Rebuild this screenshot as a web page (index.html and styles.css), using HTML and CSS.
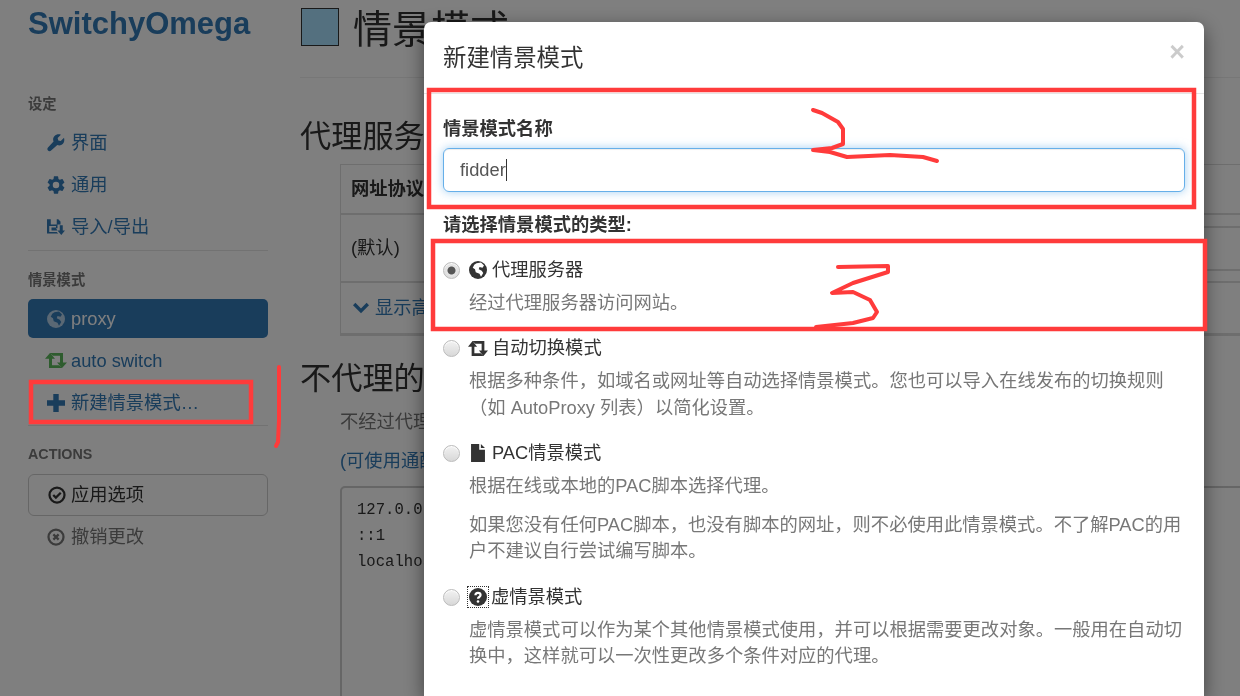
FILE: index.html
```html
<!DOCTYPE html>
<html lang="zh-CN">
<head>
  <meta charset="UTF-8" />
  <title>SwitchyOmega</title>
  <link rel="stylesheet" href="styles.css">
</head>
<body>

<div class="page">
  <aside class="sidebar">
    <div class="logo">SwitchyOmega</div>

    <div class="nav-head first">设定</div>
    <a class="pill">
      <svg class="ico" viewBox="1 1 22 22"><path d="M21.8 5.6l-4 4-3-.8-.8-3 4-4C15.2 1 12 1.5 10.2 3.4 8.4 5.2 8 7.9 9 10.1L2.2 17.6c-1 1-1 2.7 0 3.7s2.7 1.1 3.8 0l7.6-6.8c2.2 1 4.9.6 6.6-1.2 1.9-1.9 2.4-5 1.6-7.7z"/></svg>界面</a>
    <a class="pill">
      <svg class="ico" viewBox="2 2 20 20"><path d="M19.14 12.94c.04-.3.06-.61.06-.94 0-.32-.02-.64-.07-.94l2.03-1.58a.49.49 0 0 0 .12-.61l-1.92-3.32a.488.488 0 0 0-.59-.22l-2.39.96c-.5-.38-1.03-.7-1.62-.94l-.36-2.54a.484.484 0 0 0-.48-.41h-3.84c-.24 0-.43.17-.47.41l-.36 2.54c-.59.24-1.13.57-1.62.94l-2.39-.96c-.22-.08-.47 0-.59.22L2.74 8.87c-.12.21-.08.47.12.61l2.03 1.58c-.05.3-.09.63-.09.94s.02.64.07.94l-2.03 1.58a.49.49 0 0 0-.12.61l1.92 3.32c.12.22.37.29.59.22l2.39-.96c.5.38 1.03.7 1.62.94l.36 2.54c.05.24.24.41.48.41h3.84c.24 0 .44-.17.47-.41l.36-2.54c.59-.24 1.13-.56 1.62-.94l2.39.96c.22.08.47 0 .59-.22l1.92-3.32c.12-.22.07-.47-.12-.61l-2.01-1.58zM12 15.6A3.6 3.6 0 1 1 12 8.4a3.6 3.6 0 0 1 0 7.2z"/></svg>通用</a>
    <a class="pill">
      <svg class="ico" viewBox="0 1 24 23"><path d="M0 2h5v7h8V2h2l3 3v4h-4v5h-2l2 3H6v-4h6v-2H3v8h10l2 2H0z"/><path d="M17 10h4v7h3l-5 6-5-6h3z"/></svg>导入/导出</a>
    <div class="divider"></div>

    <div class="nav-head">情景模式</div>
    <a class="pill active">
      <svg class="ico globe" viewBox="0 0 24 24"><circle cx="12" cy="12" r="12"/><path class="land" d="M10 3l6-1 4 4-2 3-4-1-1 3 4 2 2 3-3 5-2-4-5-2-1-4-3-2 2-4z"/></svg>proxy</a>
    <a class="pill">
      <svg class="ico retweet green" viewBox="1 4 22 16" preserveAspectRatio="none"><path d="M6 4l5 6H8v7h7l3 3H5V10H1zM18 20l-5-6h3V7H9L6 4h13v10h4z"/></svg>auto switch</a>
    <a class="pill">
      <svg class="ico" viewBox="2 2 20 20"><path d="M9 2h6v7h7v6h-7v7H9v-7H2V9h7z"/></svg>新建情景模式…</a>
    <div class="divider"></div>

    <div class="nav-head actions">ACTIONS</div>
    <button class="btn-apply">
      <svg class="ico" viewBox="0 0 24 24"><circle class="ring" cx="12" cy="12" r="10"/><path class="ring" d="M7 12l3.5 3.5L17 9"/></svg>应用选项</button>
    <a class="pill muted">
      <svg class="ico" viewBox="0 0 24 24"><circle class="ring" cx="12" cy="12" r="10"/><path class="ring" d="M8.5 8.5l7 7M15.5 8.5l-7 7"/></svg>撤销更改</a>
  </aside>

  <main class="content">
    <div class="page-title">
      <span class="color-box"></span>
      <h1>情景模式:</h1>
    </div>

    <h2 class="server-head">代理服务器</h2>
    <div class="box-table">
      <div class="tr thead"><b>网址协议</b></div>
      <div class="tr tbody">(默认)<span class="row-lines"></span></div>
      <div class="tr tfoot">
        <svg class="ico link" viewBox="2 4 20 15"><path d="M2 8l3-3 7 7 7-7 3 3-10 10z"/></svg><a class="link">显示高级设置</a>
      </div>
    </div>

    <h2 class="bypass-head">不代理的地址列表</h2>
    <p class="note">不经过代理连接的地址列表</p>
    <p class="note"><a class="link">(可使用通配符等匹配规则)</a></p>
    <div class="bypass-list">127.0.0.1<br>::1<br>localhost</div>
  </main>
</div>

<div class="backdrop"></div>

<div class="modal">
  <div class="modal-head">
    <h4>新建情景模式</h4>
    <span class="close">×</span>
  </div>
  <div class="modal-body">
    <label class="field-label">情景模式名称</label>
    <div class="name-input">fidder<span class="caret"></span></div>

    <label class="field-label type-label">请选择情景模式的类型:</label>

    <div class="option">
      <input type="radio" name="ptype" checked>
      <div class="opt-title">
        <svg class="ico globe" viewBox="0 0 24 24"><circle cx="12" cy="12" r="12"/><path class="land" d="M10 3l6-1 4 4-2 3-4-1-1 3 4 2 2 3-3 5-2-4-5-2-1-4-3-2 2-4z"/></svg>代理服务器
      </div>
      <p class="help">经过代理服务器访问网站。</p>
    </div>

    <div class="option">
      <input type="radio" name="ptype">
      <div class="opt-title">
        <svg class="ico wide" viewBox="1 4 22 16" preserveAspectRatio="none"><path d="M6 4l5 6H8v7h7l3 3H5V10H1zM18 20l-5-6h3V7H9L6 4h13v10h4z"/></svg>自动切换模式
      </div>
      <p class="help">根据多种条件，如域名或网址等自动选择情景模式。您也可以导入在线发布的切换规则（如 AutoProxy 列表）以简化设置。</p>
    </div>

    <div class="option">
      <input type="radio" name="ptype">
      <div class="opt-title">
        <svg class="ico" viewBox="3 1 19 22"><path d="M4 1h10v7h7v15H4z"/><path d="M16 1l5 5h-5z"/></svg>PAC情景模式
      </div>
      <p class="help">根据在线或本地的PAC脚本选择代理。</p>
      <p class="help">如果您没有任何PAC脚本，也没有脚本的网址，则不必使用此情景模式。不了解PAC的用户不建议自行尝试编写脚本。</p>
    </div>

    <div class="option">
      <input type="radio" name="ptype">
      <div class="opt-title">
        <span class="focus-mark"><svg class="ico" viewBox="0 0 24 24"><circle cx="12" cy="12" r="12"/><path class="qmark" d="M8.6 9.6c0-2 1.5-3.2 3.4-3.2s3.4 1.2 3.4 3c0 2.6-3.4 2.6-3.4 5"/><circle class="qdot" cx="12" cy="18" r="1.7"/></svg></span>虚情景模式
      </div>
      <p class="help">虚情景模式可以作为某个其他情景模式使用，并可以根据需要更改对象。一般用在自动切换中，这样就可以一次性更改多个条件对应的代理。</p>
    </div>
  </div>
</div>

<!-- hand drawn marks on top of the screenshot -->
<svg class="marks" viewBox="0 0 1240 696">
  <rect x="31" y="382" width="220" height="40"/>
  <rect x="429" y="90" width="765" height="117"/>
  <rect x="433" y="241" width="772" height="88"/>
  <path d="M279 367 L279 420 L278 442 L276 446"/>
  <path d="M813 110 L822 113 L838 122 L843 129 L843 144 L832 148 L813 150 L830 152 L847 157 L890 155 L923 157 L937 161"/>
  <path d="M838 267 L888 266 L888 272 L853 283 L832 293 L853 292 L870 300 L877 312 L873 318 L853 323 L816 327"/>
</svg>

</body>
</html>
```

FILE: styles.css
```css
html, body {
  margin:0; height:100%; overflow:hidden;
}
body {
  font-family: "Liberation Sans", "Noto Sans CJK SC", sans-serif;
  font-size:18.3px; line-height:26px;
  background:#fff; color:#333;
  width:1240px; height:696px; position:relative;
  filter:blur(.35px);
}
.page {
  display:flex; height:696px; overflow:hidden;
}

/* sidebar */
.sidebar {
  width:240px; flex:none;
  margin:0 32px 0 28px;
}
.logo {
  font-size:31px; font-weight:700; line-height:48px;
  color:#337ab7;
}
.nav-head {
  font-size:14.3px; font-weight:700; line-height:20px;
  color:#777;
  margin:19px 0 9.5px;
}
.nav-head.first {
  margin-top:46px;
}
.nav-head.actions {
  margin-top:18px;
}
.pill {
  display:flex; align-items:center;
  height:39px; padding-left:19px; margin-top:3px;
  border-radius:5px;
  color:#337ab7;
}
.nav-head + .pill {
  margin-top:0;
}
.pill.active {
  background:#337ab7; color:#fff;
}
.pill.muted { color:#777; margin-top:2px; }
.divider {
  height:1px; background:#e5e5e5; margin-top:3px;
}
.ico {
  width:18px; height:18px; flex:none; fill:currentColor;
  margin-right:6px;
}
.ico.green { color:#5cb85c; width:22px; height:15px; margin:0 4px 0 -2px; }
.ico.globe .land { fill:#fff; }
.pill.active .ico.globe { color:#b4d0e8; }
.pill.active .ico.globe .land { fill:#337ab7; }
.ring {
  fill:none; stroke:currentColor; stroke-width:3;
}
.btn-apply {
  display:flex; align-items:center;
  width:240px; height:42px; padding:0 0 0 19px;
  font:inherit; color:#333;
  background:#fff; border:1.5px solid #ccc; border-radius:6px;
}
.btn-apply .ico { margin-right:5px; }

/* main column */
.content {
  flex:1; min-width:0; margin-right:-60px;
}
.page-title {
  display:flex; align-items:flex-start; gap:14px;
  height:78px; box-sizing:border-box;
  padding:8px 0 0 1px;
  border-bottom:1px solid #eee;
}
.color-box {
  width:38px; height:38px; box-sizing:border-box;
  background:#a8e0ff;
  border:1.5px solid #333;
}
.page-title h1 {
  margin:-4px 0 0; font-size:39px; line-height:52px; font-weight:400;
}
h2 {
  margin:0; font-size:31.2px; line-height:36px; font-weight:400;
}
.server-head { margin-top:41px; }
.box-table {
  margin:9px 0 0 40px;
  border:1px solid #ddd; border-right:0;
  box-sizing:border-box;
}
.tr { padding-left:10px; display:flex; align-items:center; }
.thead { height:50px; border-bottom:2px solid #ddd; box-sizing:border-box; }
.tbody { height:68px; border-bottom:2px solid #ddd; box-sizing:border-box; position:relative; }
.row-lines {
  position:absolute; right:0; top:11px; width:100px; height:41px;
  border-top:2px solid #ddd; border-bottom:2px solid #ddd;
}
.tfoot { height:52px; color:#337ab7; border-bottom:2px solid #ddd; box-sizing:border-box; }
.tfoot .ico { width:16px; height:12px; margin:0 6px 0 2px; }
.link { color:#337ab7; }
.bypass-head { margin-top:25px; }
.note {
  margin:12px 0 0 40px; color:#777;
}
.note + .note { margin-top:13px; }
.bypass-list {
  margin:12px 0 0 40px; height:300px;
  padding:9px 15px;
  font-family:"Liberation Mono", monospace; font-size:15.6px; line-height:26px;
  border:2px solid #ccc; border-radius:5px;
}

/* dialog */
.backdrop {
  position:absolute; inset:0; background:rgba(0,0,0,.5);
}
.modal {
  position:absolute; left:424px; top:22px; width:780px; height:674px;
  background:#fff; border-radius:7px 7px 0 0;
  box-shadow:0 6px 20px rgba(0,0,0,.5);
  color:#333;
}
.modal-head {
  display:flex; justify-content:space-between;
  height:72px; box-sizing:border-box; padding:21px 19px 0;
  border-bottom:1px solid #e5e5e5;
}
.modal-head h4 {
  margin:0; font-size:23.4px; line-height:30px; font-weight:400;
}
.close {
  font-size:27px; font-weight:700; line-height:16px; color:#000; opacity:.2;
  margin-top:1px;
}
.modal-body {
  padding:22px 19px 0;
}
.field-label {
  display:block; font-weight:700; margin-bottom:5.5px;
}
.type-label {
  margin:20.5px 0 18.5px;
}
.name-input {
  display:flex; align-items:center;
  height:44px; box-sizing:border-box; padding-left:16px;
  color:#555;
  border:1.5px solid #66afe9; border-radius:6px;
  box-shadow:inset 0 1px 1px rgba(0,0,0,.075), 0 0 10px rgba(102,175,233,.6);
}
.caret {
  width:1px; height:22px; background:#333;
}
.option {
  display:grid; grid-template-columns:26px 1fr;
  margin-bottom:19px;
}
.option input {
  appearance:none; -webkit-appearance:none;
  width:17px; height:17px; margin:5px 0 0 0;
  border:1px solid #bbb; border-radius:50%; box-sizing:border-box;
  background:linear-gradient(#f2f2f2, #d8d8d8);
  box-shadow:inset 0 1px 1px #fff;
}
.option input:checked {
  background:radial-gradient(circle, #555 0, #555 3.5px, #e6e6e6 4.5px, #d4d4d4 100%);
}
.opt-title {
  grid-column:2; display:flex; align-items:center; color:#333;
}
.opt-title .ico { margin-right:5px; }
.opt-title .ico.wide { width:20px; height:15px; margin:0 4px 0 -1px; }
.focus-mark {
  display:flex; padding:1px; margin:-2px 3px -2px -1px; outline:1px dotted #333;
}
.focus-mark .ico { margin:0; }
.qmark { fill:none; stroke:#fff; stroke-width:3; }
.qdot { fill:#fff; }
.help {
  grid-column:2; margin:7px 0 0; color:#777; line-height:26.5px;
}
.help + .help { margin-top:12px; }

/* red annotations */
.marks {
  position:absolute; left:0; top:0; width:1240px; height:696px;
  fill:none; stroke:#ff3b3b; stroke-width:4; stroke-linejoin:round; stroke-linecap:round;
}
.marks rect { stroke-linejoin:miter; stroke-width:4.5; }
```
